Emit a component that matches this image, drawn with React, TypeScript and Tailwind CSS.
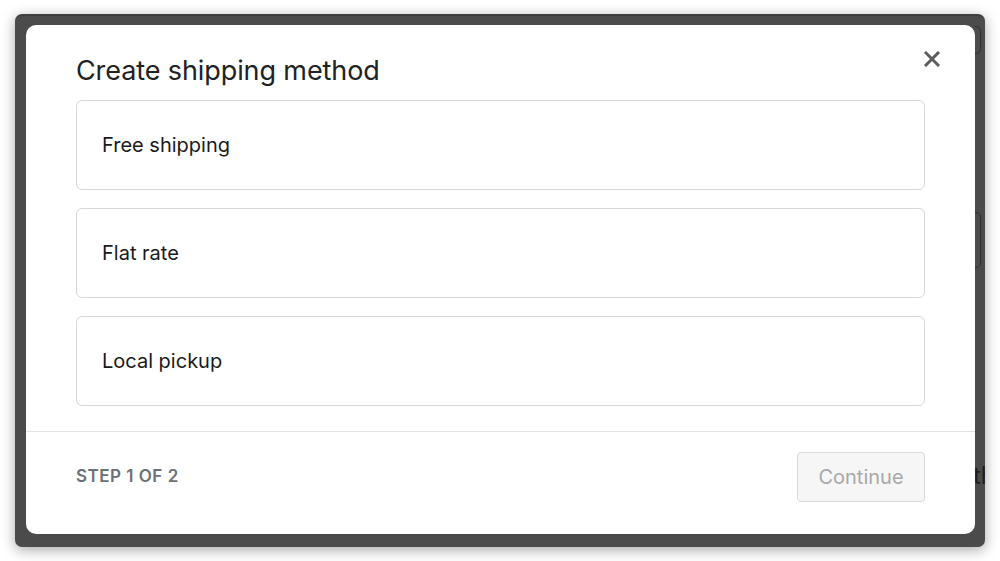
import React from "react";

const methods = ["Free shipping", "Flat rate", "Local pickup"];

function CloseIcon() {
  return (
    <svg width="16" height="16" viewBox="0 0 16 16" fill="none">
      <path d="M2 2L14 14M14 2L2 14" stroke="#5c5c5c" strokeWidth="3" strokeLinecap="square" />
    </svg>
  );
}

export default function App() {
  return (
    <div className="w-[1000px] h-[561px] bg-white pt-[14px] px-[15px] font-['Inter','Noto_Sans',sans-serif]">
      {/* overlay frame */}
      <div className="h-[533px] flex rounded-[7px] bg-[#4b4b4b] border-t-[2px] border-[#3e3e3e] pl-[11px] pt-[9px] pb-[13px] shadow-[0_3px_14px_rgba(0,0,0,0.35)] overflow-hidden">
        {/* modal */}
        <div className="relative w-[949px] shrink-0 bg-white rounded-[10px] flex flex-col">
          <button type="button" className="absolute right-[35px] top-[26px] cursor-pointer">
            <CloseIcon />
          </button>

          <div className="px-[50px] pt-[30px] pb-[25px]">
            <h2 className="text-[27px] leading-[32px] text-[#202223] font-normal tracking-[-0.1px]">
              Create shipping method
            </h2>
            <div className="mt-[13px] flex flex-col gap-[18px]">
              {methods.map((m) => (
                <button
                  key={m}
                  type="button"
                  className="h-[90px] w-full rounded-[6px] border border-[#d6d6d6] bg-white px-[25px] text-left text-[20px] text-[#1a1a1a] cursor-pointer"
                >
                  {m}
                </button>
              ))}
            </div>
          </div>

          <div className="border-t border-[#e1e3e5] flex items-center justify-between px-[50px] pt-[20px] pb-[32px]">
            <span className="text-[17px] font-semibold tracking-[0.5px] text-[#6d7175] uppercase">Step 1 of 2</span>
            <button
              type="button"
              disabled
              className="h-[50px] w-[128px] rounded-[4px] border border-[#d9d9d9] bg-[#f6f6f7] text-[20px] text-[#a8a8a8]"
            >
              Continue
            </button>
          </div>
        </div>

        {/* page behind the overlay */}
        <div className="flex-1 overflow-hidden flex flex-col">
          <div className="mt-[1px] h-[28px] w-[20px] rounded-[5px] border border-[#2f2f2f] -ml-[14px]" />
          <div className="mt-[158px] h-[56px] w-[20px] rounded-[5px] border border-[#2f2f2f] -ml-[14px]" />
          <div className="mt-[194px] text-[24px] leading-[28px] text-[#1e1e1e] -ml-[2px] whitespace-nowrap">th</div>
        </div>
      </div>
    </div>
  );
}
